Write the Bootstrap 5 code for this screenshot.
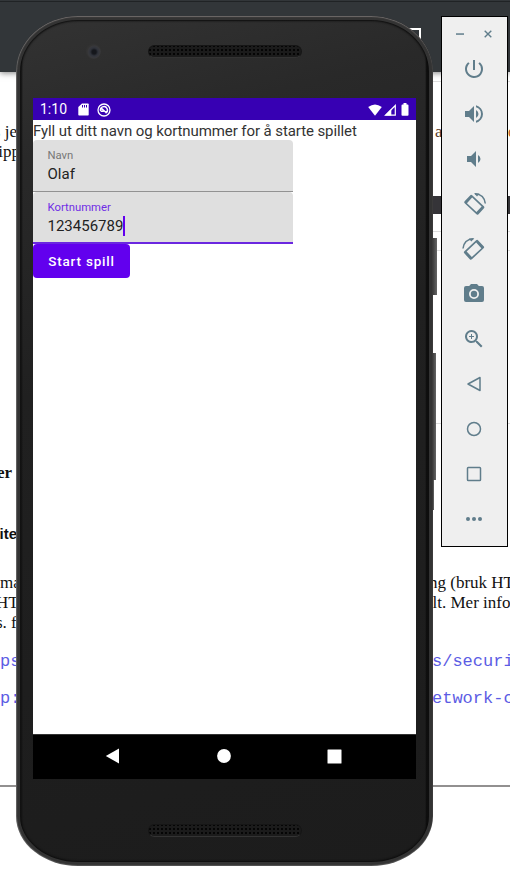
<!DOCTYPE html>
<html lang="no">
<head>
<meta charset="utf-8">
<meta name="viewport" content="width=device-width, initial-scale=1">
<title>Android Emulator</title>
<link href="https://cdn.jsdelivr.net/npm/bootstrap@5.3.0/dist/css/bootstrap.min.css" rel="stylesheet">
<style>
body{width:510px;height:877px;background:#fff;font-family:Roboto,sans-serif}
.desk{width:510px;height:877px}
.doc-bar{left:0;top:0;width:510px;height:72px;background:#323639;border-top:1px solid #323639;box-shadow:0 1px 6px rgba(0,0,0,.5)}
.doc-bar::before{content:"";display:block;height:1px;background:#202325}
.doc-icon{left:408px;top:28px;width:13px;height:13px;border:2px solid #fff}
.snip{position:absolute;white-space:pre;color:#111;font:17px/20px "Liberation Serif",serif}
.snip-l{right:493px;text-align:right}
.snip-b{font-weight:700}
.snip-sans{font-family:"Liberation Sans",sans-serif;font-weight:700;font-size:15px}
.snip-mono{font-family:"Liberation Mono",monospace;color:#5c5ce4;font-size:17px}
.rule{position:absolute;left:0;width:510px;height:2px;background:#929090}
.hair{position:absolute;left:430px;width:80px;height:1px;background:#ddd}
.dark-strip{position:absolute;left:430px;top:196px;width:80px;height:18px;background:#353438}
.side-key{position:absolute;background:linear-gradient(90deg,#333,#666)}
.phone{left:16px;top:16px;width:417px;height:850px;border-radius:62px/56px 56px 50px 50px;background:linear-gradient(90deg,#5a5a5a 0,#555 3px,#161616 5px,transparent 7px,transparent 409px,#0b0b0b 411px,#222 414px,#353535 417px),linear-gradient(165deg,#333 0,#292929 15%,#202020 40%,#1c1c1c 100%);box-shadow:inset 0 1px 1px #6f6b6a,inset 0 -1px 1px #555,inset 1px 0 1px #666,inset 0 0 0 4px #333,inset 0 0 2px 5px #0c0c0c;overflow:hidden;padding:0 17px}
.top-bezel{height:82px}
.bottom-bezel{height:87px}
.lens{left:70px;top:28px;width:15px;height:15px;border-radius:50%;background:radial-gradient(circle at 54% 53%,#15171c 0 2px,#30333b 4px,#38383b 6px,#333 7px)}
.grille{left:132px;width:154px;height:13px;border-radius:7px;background:radial-gradient(circle,#050505 0 1px,transparent 1.4px) 3px 2px/4px 4px,#1b1b1b;border:1px solid #161616;border-bottom-color:#333}
.screen{width:383px;height:681px;background:#fff}
.status{height:22px;background:#3700b3;color:#fff;font-size:14px;padding:1px 7px 0 7px}
.content-app{height:614px}
.intro{font-size:15px;line-height:18px;height:20px;padding-top:2px;color:#333;white-space:nowrap;letter-spacing:-.09px}
.field{width:260px;height:52px;background:#dfdfdf;border-bottom:1px solid #929292;border-radius:4px 4px 0 0;padding:9px 0 0 14.5px;color:#222}
.field label{font-size:11.3px;line-height:14px;color:#777;display:block}
.field .value{font-size:15px;line-height:20px;height:20px;margin-top:1px}
.field.active{border-bottom:2px solid #6b27e0}
.field.active label{color:#702de5}
.caret{width:2px;height:20px;background:#6200ee}
.btn-start{width:97px;height:34px;border-radius:4px;background:#6200ee;color:#fff;font-size:13.5px;font-weight:500;letter-spacing:.8px;padding:0;line-height:34px;border:0}
.nav-keys{height:45px;background:#000;padding:0 74px 2px 72px;border-top:1px solid #333}
.tools{left:441px;top:16px;width:67px;height:531px;background:#efefef;border:1px solid #000;padding-right:1px}
.tools svg{display:block;fill:#607d8b}
.win-ctl{height:29px;padding:5px 14px 0 14px}
.tool-item{height:45px}
</style>
</head>
<body class="m-0 overflow-hidden">
<div class="desk position-relative overflow-hidden">
  <div class="doc-bar position-absolute"></div>
  <div class="doc-icon position-absolute"></div>
  <div class="hair" style="top:81px"></div>
  <div class="dark-strip"></div>
  <div class="hair" style="top:231px"></div><div class="hair" style="top:250px"></div><div class="hair" style="top:423px"></div>
  <div class="snip snip-l" style="top:122px">s je</div>
  <div class="snip snip-l" style="top:142px;right:490px">tipp</div>
  <div class="snip" style="top:122px;left:435px;color:#5a3a28">a</div>
  <div class="snip" style="top:122px;left:508px;color:#c0601d">d</div>
  <div class="snip snip-l snip-b" style="top:463px;right:498px">er</div>
  <div class="snip snip-l snip-sans" style="top:524px">ite</div>
  <div class="snip" style="top:573px;left:0">ma</div>
  <div class="snip" style="top:593px;left:-4px">HT</div>
  <div class="snip" style="top:613px;left:-4px">s. f</div>
  <div class="snip snip-mono" style="top:652px;left:0">ps</div>
  <div class="snip snip-mono" style="top:689px;left:0">p:</div>
  <div class="snip" style="top:573px;left:429px">ng (bruk HTT</div>
  <div class="snip" style="top:593px;left:425px">elt. Mer infor</div>
  <div class="snip snip-mono" style="top:652px;left:432px">s/securit</div>
  <div class="snip snip-mono" style="top:689px;left:432px">etwork-co</div>
  <div class="rule" style="top:785px"></div>
  <div class="side-key" style="left:432px;top:238px;width:5px;height:57px"></div>
  <div class="side-key" style="left:432px;top:353px;width:4px;height:127px"></div>
  <div class="side-key" style="left:432px;top:480px;width:2px;height:30px"></div>

  <main class="phone position-absolute">
    <div class="top-bezel"></div>
    <div class="lens position-absolute"></div>
    <div class="grille position-absolute" style="top:29px"></div>
    <section class="screen d-flex flex-column">
      <div class="status d-flex align-items-center">
        <span>1:10</span>
        <svg style="margin-left:11px" width="11" height="13" viewBox="0 0 11 13"><path fill="#fff" d="M4 .5h6q.7 0 .7.7v10.6q0 .7-.7.7H1q-.7 0-.7-.7V4z"/><path stroke="#3700b3" d="M4.500 2v2.500M6.500 2v2.500M8.500 2v2.500"/></svg>
        <svg style="margin-left:8px" width="14" height="14" viewBox="0 0 14 14" fill="none" stroke="#fff"><circle cx="7" cy="7" r="6" stroke-width="1.300"/><path d="M3.800 8.300A3.400 3.400 0 1 1 8.500 10M3.600 4.600l6 5.400M4 8.300h2.800" stroke-width="1.500"/></svg>
        <svg class="ms-auto" width="14" height="12" viewBox="0 0 14 12"><path fill="#fff" d="M.2 3Q7-2 13.800 3L7 11.700z"/></svg>
        <svg style="margin-left:2px" width="12" height="12" viewBox="0 0 12 12"><path fill="none" stroke="#fff" stroke-width="1.200" d="M1.500 11.200h9.800V1.500z"/><path fill="#fff" d="M1 11.500 7.300 5v6.500z"/></svg>
        <svg style="margin-left:5px" width="8" height="13" viewBox="0 0 8 13"><path fill="#fff" d="M2.500 0h3v1.500h1q1 0 1 1V12q0 .8-1 .8h-5q-1 0-1-.8V2.500q0-1 1-1h1z"/></svg>
      </div>
      <div class="content-app">
        <div class="intro">Fyll ut ditt navn og kortnummer for å starte spillet</div>
        <div class="field"><label>Navn</label><div class="value">Olaf</div></div>
        <div class="field active"><label>Kortnummer</label><div class="value d-flex align-items-center">123456789<span class="caret"></span></div></div>
        <button class="btn btn-start d-block" type="button">Start spill</button>
      </div>
      <div class="nav-keys d-flex align-items-center justify-content-between">
        <svg width="15" height="16" viewBox="0 0 15 16"><path fill="#fff" d="M14 .5v15L.8 8z"/></svg>
        <svg width="14" height="14" viewBox="0 0 14 14"><circle cx="7" cy="7" r="6.900" fill="#fff"/></svg>
        <svg width="15" height="15" viewBox="0 0 15 15"><rect x=".5" y=".5" width="14" height="14" rx=".5" fill="#fff"/></svg>
      </div>
    </section>
    <div class="bottom-bezel"></div>
    <div class="grille position-absolute" style="top:808px"></div>
  </main>

  <aside class="tools position-absolute">
    <div class="win-ctl d-flex justify-content-between align-items-center">
      <svg width="8" height="8"><path d="M0 3.300h8v1.500H0z"/></svg>
      <svg width="8" height="8" viewBox="0 0 8 8"><path d="M.7.7l6.600 6.600M7.300.7.7 7.300" stroke="#607d8b" stroke-width="1.400"/></svg>
    </div>
    <div class="tool-item d-flex align-items-center justify-content-center"><svg width="24" height="24" viewBox="0 0 24 24"><path d="M13 3h-2v10h2V3zm4.830 2.170-1.420 1.420A6.920 6.920 0 0 1 19 12a7 7 0 1 1-11.420-5.420L6.170 5.170A8.930 8.930 0 0 0 3 12a9 9 0 1 0 14.830-6.830z"/></svg></div>
    <div class="tool-item d-flex align-items-center justify-content-center"><svg width="24" height="24" viewBox="0 0 24 24"><path d="M3 9v6h4l5 5V4L7 9H3zm13.500 3A4.500 4.500 0 0 0 14 7.970v8.050A4.470 4.470 0 0 0 16.500 12zM14 3.230v2.060a7 7 0 0 1 0 13.420v2.060a9 9 0 0 0 0-17.540z"/></svg></div>
    <div class="tool-item d-flex align-items-center justify-content-center"><svg width="24" height="24" viewBox="0 0 24 24"><path d="M18.500 12A4.500 4.500 0 0 0 16 7.970v8.050A4.470 4.470 0 0 0 18.500 12zM5 9v6h4l5 5V4L9 9H5z"/></svg></div>
    <div class="tool-item d-flex align-items-center justify-content-center"><svg width="25" height="25" viewBox="0 0 25 25"><g id="rot"><path fill-rule="evenodd" transform="translate(12.300 13.800) rotate(43)" d="M-8-5.500H8Q9.500-5.500 9.500-4V4Q9.500 5.500 8 5.500H-8Q-9.500 5.500-9.500 4V-4Q-9.500-5.500-8-5.500zM-6.500-3.800V3.800H6.500V-3.800z"/><path d="M13 2.700Q22.300 3.300 23.300 12.500" style="fill:none" stroke="#607d8b" stroke-width="1.500"/><path d="M12 2.300 17.500 2.500 15 5.500z"/></g></svg></div>
    <div class="tool-item d-flex align-items-center justify-content-center"><svg width="25" height="25" viewBox="0 0 25 25"><use href="#rot" transform="matrix(-1 0 0 1 24.300 0)"/></svg></div>
    <div class="tool-item d-flex align-items-center justify-content-center"><svg width="24" height="24" viewBox="0 0 24 24"><circle cx="12" cy="12" r="3.200"/><path d="M9 2 7.170 4H4a2 2 0 0 0-2 2v12a2 2 0 0 0 2 2h16a2 2 0 0 0 2-2V6a2 2 0 0 0-2-2h-3.170L15 2H9zm3 15a5 5 0 1 1 0-10 5 5 0 0 1 0 10z"/></svg></div>
    <div class="tool-item d-flex align-items-center justify-content-center"><svg width="24" height="24" viewBox="0 0 24 24"><path d="M15.500 14h-.79l-.28-.27a6.500 6.500 0 1 0-.7.700l.27.280v.790l5 4.990L20.490 19l-4.990-5zm-6 0a4.500 4.500 0 1 1 0-9 4.500 4.500 0 0 1 0 9zm2.500-4h-2v2H9v-2H7V9h2V7h1v2h2v1z"/></svg></div>
    <div class="tool-item d-flex align-items-center justify-content-center"><svg width="16" height="16" viewBox="0 0 16 16"><path style="fill:none" stroke="#607d8b" stroke-width="1.500" stroke-linejoin="round" d="M14 1.500v13L2 8z"/></svg></div>
    <div class="tool-item d-flex align-items-center justify-content-center"><svg width="16" height="16" viewBox="0 0 16 16"><circle cx="8" cy="8" r="6.500" style="fill:none" stroke="#607d8b" stroke-width="1.500"/></svg></div>
    <div class="tool-item d-flex align-items-center justify-content-center"><svg width="16" height="16" viewBox="0 0 16 16"><rect x="1.500" y="1.500" width="13" height="13" rx=".8" style="fill:none" stroke="#607d8b" stroke-width="1.500"/></svg></div>
    <div class="tool-item d-flex align-items-center justify-content-center"><svg width="18" height="6" viewBox="0 0 18 6"><circle cx="3" cy="3" r="2"/><circle cx="9" cy="3" r="2"/><circle cx="15" cy="3" r="2"/></svg></div>
  </aside>
</div>
<script src="https://cdn.jsdelivr.net/npm/bootstrap@5.3.0/dist/js/bootstrap.bundle.min.js"></script>
</body>
</html>
